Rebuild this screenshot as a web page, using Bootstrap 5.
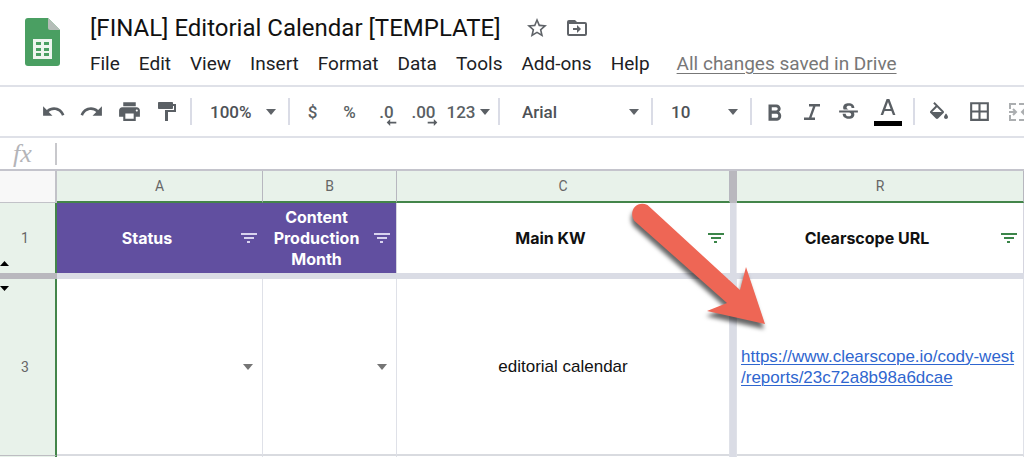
<!DOCTYPE html>
<html lang="en">
<head>
<meta charset="utf-8">
<meta name="viewport" content="width=device-width, initial-scale=1">
<title>[FINAL] Editorial Calendar [TEMPLATE]</title>
<link href="https://cdn.jsdelivr.net/npm/bootstrap@5.3.0/dist/css/bootstrap.min.css" rel="stylesheet">
<style>
  body { font-family: Roboto, "Liberation Sans", sans-serif; color: #202124; background: #fff; overflow: hidden; height: 100vh; }
  svg { display: block; flex: none; }
  .doc-header { border-bottom: 2px solid #dfe1e8; padding: 13px 16px 9px 25px; gap: 29px; }
  .doc-title { font-family: Roboto, sans-serif; font-weight: 400; font-size: 24px; line-height: 30px; margin: 0; color: #111; }
  .doc-icon { color: #5f6368; }
  .menu-row { gap: 19px; font-size: 19px; line-height: 24px; margin-top: 9px; }
  .menu-row .btn { font-size: inherit; line-height: inherit; color: #202124; }
  .saved-link { color: #777; margin-left: 8px; text-underline-offset: 3px; }
  .saved-link:hover { color: #444; }
  .toolbar { height: 51px; padding-left: 34px; border-bottom: 2px solid #dfe1e8; overflow: hidden; color: #5a5f64; }
  .toolbar > * { flex: none; }
  .toolbar .btn { height: 36px; color: inherit; font-size: 17px; font-weight: 500; line-height: 20px; }
  .tool { width: 37px; }
  .tool-md { width: 38px; }
  .tool-lg { width: 40px; }
  .tool-color { width: 42px; }
  .tool-num { width: 52px; }
  .tool-sep { width: 2px; height: 27px; margin: 0 4px; background: #dadce6; }
  .toolbar .form-select { height: 36px; border: 0; border-radius: 4px; padding: 0 20px 0 14px; color: #4d5156; font-size: 17px; font-weight: 500; line-height: 20px; background-color: transparent;
    background-image: url("data:image/svg+xml,%3Csvg xmlns='http://www.w3.org/2000/svg' viewBox='0 0 10 6'%3E%3Cpath fill='%235f6368' d='M0 0h10L5 6z'/%3E%3C/svg%3E"); background-size: 10px 6px; background-position: right 8px center; }
  .sel-zoom { width: 88px; }
  .toolbar .sel-font { width: 143px; padding-left: 18px; }
  .sel-size { width: 89px; }
  .formula { height: 33px; border-bottom: 2px solid #c4c4cc; }
  .fx-label { width: 55px; font-family: "Liberation Serif", serif; font-style: italic; font-size: 26px; line-height: 26px; color: #b4b4b8; padding-left: 13px; }
  .formula input { height: 22px; border: 0; border-left: 2px solid #c8c8cc; outline: 0; }
  .sheet { width: 100%; table-layout: fixed; border-collapse: separate; border-spacing: 0; }
  .sheet th, .sheet td { padding: 0; vertical-align: middle; position: relative; }
  .w-head { width: 57px; } .w-a { width: 206px; } .w-b { width: 134px; } .w-c { width: 333px; } .w-bar { width: 7px; }
  .col-letters th { height: 32px; background: #e8f2ea; border-right: 1px solid #b7b7bf; border-bottom: 2px solid #43854a; color: #666; font-size: 14px; font-weight: 400; text-align: center; }
  .col-letters td { background: #f8f8f8; border-right: 2px solid #c2c2c8; border-bottom: 1px solid #c2c2c8; }
  .col-letters .v-bar { background: #b9b8be; border: 0; }
  .sheet .row-num { background: #e8f2ea; border-right: 2px solid #43854a; color: #666; font-size: 14px; font-weight: 400; text-align: center; padding-right: 5px; }
  .v-bar { background: #dadce5; border-right: 1px solid #e9eaef; }
  .titles > * { height: 70px; }
  .titles th[scope=col] { font-family: Inter, Roboto, sans-serif; font-size: 16px; font-weight: 700; line-height: 21px; text-align: center; color: #111; }
  .titles th.purple[scope=col] { background: #614fa0; color: #fff; }
  .titles .edge { border-right: 1px solid #d5d5df; }
  .titles .pad-icon { padding-right: 26px; }
  .filter { position: absolute; right: 5px; top: 0; bottom: 0; width: 18px; margin: auto 0; height: 18px; padding: 0; border: 0; background: none; color: #3b8549; }
  .purple .filter { color: #d8d3ee; }
  .h-bar > * { height: 6px; background: #dadce5; }
  .h-bar > .bar-head { background: #b9b8be; }
  .grid-row > td { height: 177px; border-right: 1px solid #dfe1e8; border-bottom: 2px solid #d9dbe0; font-family: "Liberation Sans", Arial, sans-serif; font-size: 17px; line-height: 21px; color: #111; }
  .grid-row.last > td, .grid-row.last > th { height: 24px; }
  .grid-row > .row-num { border-bottom: 1px solid #bdbdc2; }
  .grid-row .v-bar { border-bottom: 0; }
  .cell-drop { position: absolute; right: 8px; top: 0; bottom: 0; margin: auto 0; width: 12px; height: 12px; padding: 0; border: 0; background: none; color: #757575; }
  .sheet .url-cell { padding: 0 0 0 4px; }
  .url-cell a { color: #2f66cf; text-underline-offset: 2px; text-decoration-thickness: 1px; }
  .hide-mark { position: absolute; left: 0; }
  .mark-up { bottom: 7px; } .mark-down { top: 7px; }
  .pointer-arrow { position: absolute; left: 620px; top: 24px; pointer-events: none; filter: drop-shadow(-1px 5px 2px rgba(0,0,0,.6)); }
</style>
</head>
<body>
<header class="doc-header d-flex">
  <svg class="mt-1" width="36" height="50" viewBox="0 0 36 50" aria-hidden="true">
    <path fill="#4a9f62" d="M3 1h20l12 12v33a3 3 0 0 1-3 3H3a3 3 0 0 1-3-3V4a3 3 0 0 1 3-3z"/>
    <path fill="#b5bdb8" d="M23 1l12 12H25a2 2 0 0 1-2-2z"/>
    <path fill="#eef5ef" fill-rule="evenodd" d="M8 22h19v20H8zM11 25v3h5v-3zm8 0v3h5v-3zm-8 6v3h5v-3zm8 0v3h5v-3zm-8 5v3h5v-3zm8 0v3h5v-3z"/>
  </svg>
  <div class="flex-grow-1">
    <div class="d-flex align-items-center">
      <h1 class="doc-title text-nowrap">[FINAL] Editorial Calendar [TEMPLATE]</h1>
      <button class="btn p-0 border-0 doc-icon ms-4 me-3" type="button" aria-label="Star"><svg width="24" height="24" viewBox="0 0 24 24" fill="currentColor"><path d="M22 9.24l-7.19-.62L12 2 9.19 8.63 2 9.24l5.46 4.73L5.82 21 12 17.27 18.18 21l-1.63-7.03L22 9.24zM12 15.4l-3.76 2.27 1-4.28-3.32-2.88 4.38-.38L12 6.1l1.71 4.04 4.38.38-3.32 2.88 1 4.28L12 15.4z"/></svg></button>
      <button class="btn p-0 border-0 doc-icon" type="button" aria-label="Move"><svg width="24" height="24" viewBox="0 0 24 24" fill="currentColor"><path fill-rule="evenodd" d="M4 4h6l2 2h8a2 2 0 0 1 2 2v10a2 2 0 0 1-2 2H4a2 2 0 0 1-2-2V6a2 2 0 0 1 2-2zm0 4v10h16V8z"/><path d="M8 12h4V9l4 4-4 4v-3H8z"/></svg></button>
    </div>
    <nav class="menu-row d-flex align-items-center text-nowrap" aria-label="Menu">
      <button class="btn p-0 border-0" type="button">File</button>
      <button class="btn p-0 border-0" type="button">Edit</button>
      <button class="btn p-0 border-0" type="button">View</button>
      <button class="btn p-0 border-0" type="button">Insert</button>
      <button class="btn p-0 border-0" type="button">Format</button>
      <button class="btn p-0 border-0" type="button">Data</button>
      <button class="btn p-0 border-0" type="button">Tools</button>
      <button class="btn p-0 border-0" type="button">Add-ons</button>
      <button class="btn p-0 border-0" type="button">Help</button>
      <a class="saved-link" href="#">All changes saved in Drive</a>
    </nav>
  </div>
</header>

<div class="toolbar d-flex align-items-center" role="toolbar" aria-label="Formatting">
  <button class="btn tool-md p-0 border-0 d-flex align-items-center justify-content-center" type="button" aria-label="Undo"><svg width="25" height="25" viewBox="0 0 24 24" fill="currentColor"><path d="M12.5 8c-2.65 0-5.05.99-6.9 2.6L2 7v9h9l-3.62-3.62c1.39-1.16 3.16-1.88 5.12-1.88 3.54 0 6.55 2.31 7.6 5.5l2.37-.78C21.08 11.03 17.15 8 12.5 8z"/></svg></button>
  <button class="btn tool-md p-0 border-0 d-flex align-items-center justify-content-center" type="button" aria-label="Redo"><svg width="25" height="25" viewBox="0 0 24 24" fill="currentColor"><path d="M18.4 10.6C16.55 8.99 14.15 8 11.5 8c-4.65 0-8.58 3.03-9.96 7.22L3.9 16c1.05-3.19 4.05-5.5 7.6-5.5 1.95 0 3.73.72 5.12 1.88L13 16h9V7l-3.6 3.6z"/></svg></button>
  <button class="btn tool-md p-0 border-0 d-flex align-items-center justify-content-center" type="button" aria-label="Print"><svg width="25" height="25" viewBox="0 0 24 24" fill="currentColor"><path d="M19 8H5c-1.66 0-3 1.34-3 3v6h4v4h12v-4h4v-6c0-1.66-1.34-3-3-3zm-3 11H8v-5h8v5zm3-7c-.55 0-1-.45-1-1s.45-1 1-1 1 .45 1 1-.45 1-1 1zm-1-9H6v4h12V3z"/></svg></button>
  <button class="btn tool-md p-0 border-0 d-flex align-items-center justify-content-center" type="button" aria-label="Paint format"><svg width="24" height="24" viewBox="0 0 24 24" fill="currentColor"><path d="M18 4V3c0-.55-.45-1-1-1H4c-.55 0-1 .45-1 1v5c0 .55.45 1 1 1h13c.55 0 1-.45 1-1V6h1v4h-9v11h3v-9h8V4h-3z"/></svg></button>
  <span class="tool-sep"></span>
  <select class="form-select sel-zoom" aria-label="Zoom"><option>100%</option></select>
  <span class="tool-sep"></span>
  <button class="btn tool p-0 border-0" type="button">$</button>
  <button class="btn tool p-0 border-0" type="button">%</button>
  <button class="btn tool p-0 border-0 position-relative" type="button" aria-label="Decrease decimal places">.0<svg class="position-absolute bottom-0 end-0 me-2 mb-1" width="11" height="7" viewBox="0 0 11 8" fill="currentColor"><path d="M0 4l4-4v3h7v2H4v3z"/></svg></button>
  <button class="btn tool p-0 border-0 position-relative" type="button" aria-label="Increase decimal places">.00<svg class="position-absolute bottom-0 end-0 me-1 mb-1" width="11" height="7" viewBox="0 0 11 8" fill="currentColor"><path d="M11 4L7 0v3H0v2h7v3z"/></svg></button>
  <button class="btn tool-num p-0 border-0 d-flex align-items-center justify-content-center gap-1" type="button"><span>123</span><svg width="10" height="6" viewBox="0 0 10 6" fill="currentColor"><path d="M0 0h10L5 6z"/></svg></button>
  <span class="tool-sep"></span>
  <select class="form-select sel-font" aria-label="Font"><option>Arial</option></select>
  <span class="tool-sep"></span>
  <select class="form-select sel-size" aria-label="Font size"><option>10</option></select>
  <span class="tool-sep"></span>
  <button class="btn tool p-0 border-0 d-flex align-items-center justify-content-center" type="button" aria-label="Bold"><svg width="26" height="26" viewBox="0 0 24 24" fill="currentColor"><path d="M15.6 11.79c.97-.67 1.65-1.77 1.65-2.79 0-2.26-1.75-4-4-4H6v15h8.04c2.09 0 3.71-1.9 3.71-4.29 0-1.72-.86-3.12-2.15-3.92zM9 7.5h4c.83 0 1.5.67 1.5 1.6s-.67 1.6-1.5 1.6H9V7.5zm4.5 9.8H9v-3.7h4.5c.83 0 1.5.77 1.5 1.8s-.67 1.9-1.5 1.9z"/></svg></button>
  <button class="btn tool p-0 border-0 d-flex align-items-center justify-content-center" type="button" aria-label="Italic"><svg width="24" height="24" viewBox="0 0 24 24" fill="currentColor"><path d="M9 4v2.4h4L9 17.6H4V20h11v-2.400h-3.500L15.500 6.400H20V4z"/></svg></button>
  <button class="btn tool p-0 border-0 d-flex align-items-center justify-content-center" type="button" aria-label="Strikethrough"><svg width="25" height="25" viewBox="0 0 24 22" fill="currentColor"><path d="M7.24 8.75c-.26-.48-.39-1.03-.39-1.67 0-.61.13-1.16.4-1.67.26-.5.63-.93 1.11-1.29.48-.35 1.05-.63 1.7-.83.66-.19 1.39-.29 2.18-.29.81 0 1.54.11 2.21.34.66.22 1.23.54 1.69.94.47.4.83.88 1.08 1.43.25.55.38 1.15.38 1.81h-2.700c0-.31-.05-.59-.15-.85-.09-.27-.24-.49-.44-.68-.2-.19-.45-.33-.75-.44-.3-.1-.66-.16-1.06-.16-.39 0-.74.04-1.03.13-.29.09-.53.21-.72.36-.19.16-.34.34-.44.55-.1.21-.15.43-.15.66 0 .48.25.88.74 1.21.38.25.77.48 1.41.7H7.390c-.05-.08-.11-.17-.15-.25zM21 12v-2H3v2h9.620c.18.07.4.14.55.2.37.17.66.34.87.51.21.17.35.36.43.57.07.2.11.43.11.69 0 .23-.05.45-.14.66-.09.2-.23.38-.42.53-.19.15-.42.26-.71.35-.29.08-.63.13-1.01.13-.43 0-.83-.04-1.18-.13s-.66-.23-.91-.42c-.25-.19-.45-.44-.59-.75-.14-.31-.25-.76-.25-1.210H6.400c0 .55.08 1.13.24 1.58.16.45.37.85.65 1.21.28.35.6.66.98.92.37.26.78.48 1.22.65.44.17.9.3 1.38.39.48.08.96.13 1.44.13.8 0 1.530-.09 2.180-.28s1.210-.45 1.670-.79c.46-.34.82-.77 1.070-1.270s.38-1.070.38-1.710c0-.6-.1-1.140-.31-1.610-.05-.11-.11-.23-.17-.33H21z"/></svg></button>
  <button class="btn tool-color p-0 border-0 d-flex align-items-center justify-content-center" type="button" aria-label="Text color"><svg width="28" height="30" viewBox="0 0 28 30"><path fill="currentColor" fill-rule="evenodd" d="M12.600 2h2.800l6 16h-2.500l-1.500-4h-6.800l-1.500 4H6.600zM14 4.900L11.400 12h5.200z"/><path fill="#000" d="M0 24h28v5H0z"/></svg></button>
  <span class="tool-sep"></span>
  <button class="btn tool-lg p-0 border-0 d-flex align-items-center justify-content-center" type="button" aria-label="Fill color"><svg width="24" height="24" viewBox="0 -2 24 24" fill="currentColor"><path d="M16.560 8.940L7.620 0 6.210 1.410l2.380 2.380-5.150 5.150c-.59.59-.59 1.540 0 2.120l5.500 5.500c.29.29.68.44 1.060.44s.77-.15 1.060-.44l5.500-5.500c.59-.58.59-1.530 0-2.120zM5.210 10L10 5.210 14.790 10H5.210zM19 11.500s-2 2.170-2 3.500c0 1.100.9 2 2 2s2-.9 2-2c0-1.330-2-3.500-2-3.500z"/></svg></button>
  <button class="btn tool-lg p-0 border-0 d-flex align-items-center justify-content-center" type="button" aria-label="Borders"><svg width="25" height="25" viewBox="0 0 24 24" fill="currentColor"><path d="M3 3v18h18V3H3zm8 16H5v-6h6v6zm0-8H5V5h6v6zm8 8h-6v-6h6v6zm0-8h-6V5h6v6z"/></svg></button>
  <button class="btn tool-lg p-0 border-0 d-flex align-items-center justify-content-center opacity-50" type="button" aria-label="Merge cells"><svg width="24" height="24" viewBox="0 0 24 24" fill="none" stroke="currentColor" stroke-width="2"><path d="M3 9V4h6M12 4h3M15 4h6v5M3 15v5h6M12 20h3M15 20h6v-5M2 12h7M6 9l3 3-3 3M22 12h-7M18 9l-3 3 3 3"/></svg></button>
</div>

<div class="formula d-flex align-items-center">
  <label class="fx-label" for="fx">fx</label>
  <input class="flex-grow-1" id="fx" type="text">
</div>

<main class="position-relative">
  <table class="sheet">
    <colgroup><col class="w-head"><col class="w-a"><col class="w-b"><col class="w-c"><col class="w-bar"><col></colgroup>
    <thead>
      <tr class="col-letters"><td></td><th>A</th><th>B</th><th>C</th><td class="v-bar"></td><th>R</th></tr>
    </thead>
    <tbody>
      <tr class="titles">
        <th class="row-num">1<svg class="hide-mark mark-up" width="9" height="5" viewBox="0 0 9 5"><path d="M0 5h9L4.500 0z"/></svg></th>
        <th scope="col" class="purple pad-icon">Status<button class="filter" type="button" aria-label="Filter Status"><svg width="18" height="18" viewBox="0 0 18 18" stroke="currentColor" stroke-width="2"><path d="M1 5h16M4 9h10M7 13h3"/></svg></button></th>
        <th scope="col" class="purple pad-icon edge">Content<br>Production<br>Month<button class="filter" type="button" aria-label="Filter Content Production Month"><svg width="18" height="18" viewBox="0 0 18 18" stroke="currentColor" stroke-width="2"><path d="M1 5h16M4 9h10M7 13h3"/></svg></button></th>
        <th scope="col" class="pad-icon">Main KW<button class="filter" type="button" aria-label="Filter Main KW"><svg width="18" height="18" viewBox="0 0 18 18" stroke="currentColor" stroke-width="2"><path d="M1 5h16M4 9h10M7 13h3"/></svg></button></th>
        <td class="v-bar"></td>
        <th scope="col" class="pad-icon edge">Clearscope URL<button class="filter" type="button" aria-label="Filter Clearscope URL"><svg width="18" height="18" viewBox="0 0 18 18" stroke="currentColor" stroke-width="2"><path d="M1 5h16M4 9h10M7 13h3"/></svg></button></th>
      </tr>
      <tr class="h-bar"><td class="bar-head"></td><td colspan="5"></td></tr>
      <tr class="grid-row">
        <th class="row-num">3<svg class="hide-mark mark-down" width="9" height="5" viewBox="0 0 9 5"><path d="M0 0h9L4.500 5z"/></svg></th>
        <td><button class="cell-drop" type="button" aria-label="Choose status"><svg width="12" height="12" viewBox="0 0 12 12" fill="currentColor"><path d="M1 3h10L6 9z"/></svg></button></td>
        <td><button class="cell-drop" type="button" aria-label="Choose month"><svg width="12" height="12" viewBox="0 0 12 12" fill="currentColor"><path d="M1 3h10L6 9z"/></svg></button></td>
        <td class="text-center">editorial calendar</td>
        <td class="v-bar"></td>
        <td class="url-cell"><a href="https://www.clearscope.io/cody-west/reports/23c72a8b98a6dcae">https://www.clearscope.io/cody-west<wbr>/reports/23c72a8b98a6dcae</a></td>
      </tr>
      <tr class="grid-row last"><th class="row-num"></th><td></td><td></td><td></td><td class="v-bar"></td><td></td></tr>
    </tbody>
  </table>
  <svg class="pointer-arrow" width="160" height="140" viewBox="620 195 160 140" aria-hidden="true"><path fill="#ee6655" d="M634.500 221C628 212 636 200 647.500 205L740 290l6-23 19 57-58-13 20-8z"/></svg>
</main>
<script src="https://cdn.jsdelivr.net/npm/bootstrap@5.3.0/dist/js/bootstrap.bundle.min.js"></script>
</body>
</html>
